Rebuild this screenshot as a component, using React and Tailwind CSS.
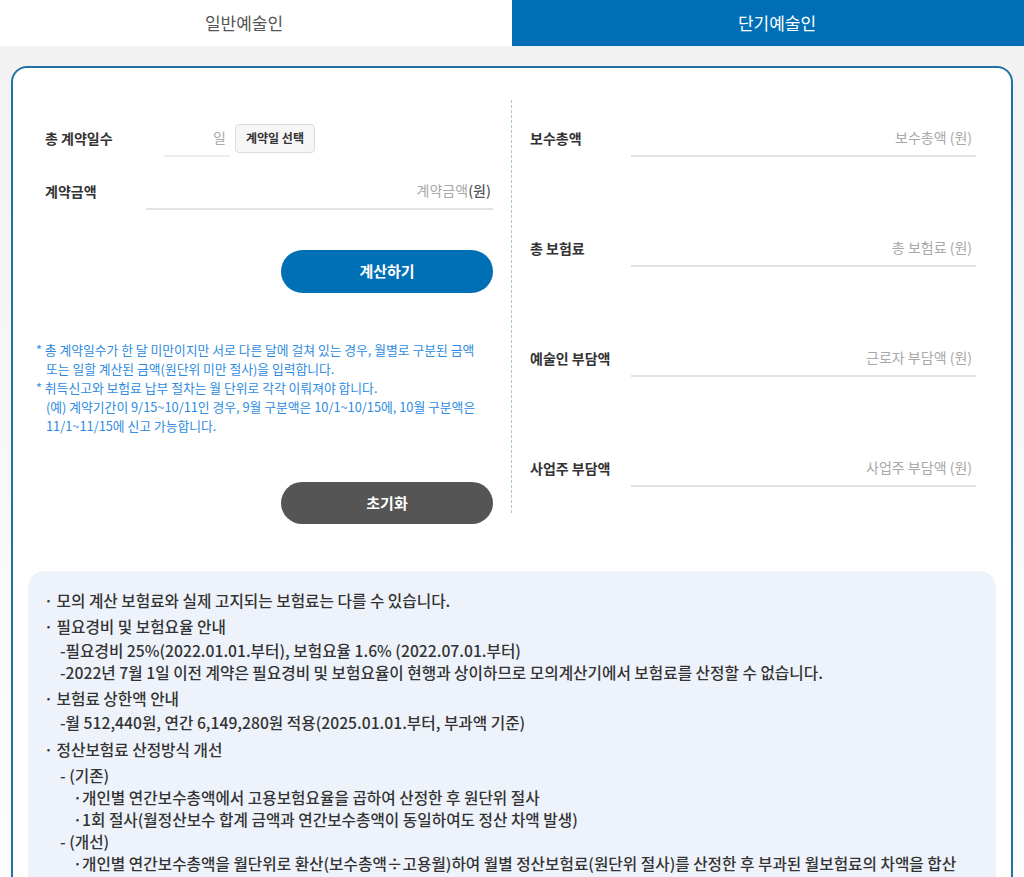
import React from "react";

const font = { fontFamily: '"Noto Sans CJK KR", "Noto Sans", sans-serif' };

function RightRow({ label, placeholder, first }) {
  return (
    <div className={`flex items-center h-[38px] ${first ? "" : "mt-[72px]"}`}>
      <div className="w-[101px] text-[14px] font-bold text-[#333]">{label}</div>
      <div className="flex-1 h-full border-b-2 border-[#e2e2e2] flex items-center">
        <input
          className="w-full bg-transparent outline-none text-right pr-[4px] text-[14px] text-[#333] placeholder:text-[#a8a8a8]"
          placeholder={placeholder}
        />
      </div>
    </div>
  );
}

export default function App() {
  return (
    <div className="w-[1024px] min-h-[877px] bg-white text-[#333]" style={font}>
      {/* Tabs */}
      <div className="flex h-[46px]">
        <div className="w-[512px] shrink-0 flex items-center justify-center pr-[24px] bg-white text-[17px] text-[#555]">일반예술인</div>
        <div className="w-[512px] shrink-0 flex items-center justify-center pl-[18px] bg-[#006fb6] text-[17px] text-white">단기예술인</div>
      </div>
      <div className="bg-gradient-to-b from-[#f2f2f2] to-white pt-[20px]">
        <div className="mx-[11px] border-2 border-[#1f72a3] rounded-[16px] bg-white pt-[32px] pb-[40px]">
          <div className="flex items-start">
            {/* Left column */}
            <div className="w-[498px] pl-[32px] pr-[18px] pt-[19px]">
              <div className="flex items-center h-[38px]">
                <div className="w-[119px] text-[14px] font-bold text-[#333]">총 계약일수</div>
                <div className="w-[66px] h-full border-b-2 border-[#ececec] flex items-center">
                  <input
                    className="w-full bg-transparent outline-none text-right pr-[4px] text-[14px] placeholder:text-[#a8a8a8]"
                    placeholder="일"
                  />
                </div>
                <button className="ml-[5px] h-[29px] px-[10px] rounded-[4px] border border-[#dcdcdc] bg-[#f6f6f6] text-[12px] font-bold text-[#333]">
                  계약일 선택
                </button>
              </div>
              <div className="flex items-center h-[38px] mt-[15px]">
                <div className="w-[101px] text-[14px] font-bold text-[#333]">계약금액</div>
                <div className="flex-1 h-full border-b-2 border-[#e2e2e2] flex items-center pr-[2px]">
                  <input
                    className="flex-1 min-w-0 bg-transparent outline-none text-right text-[14px] placeholder:text-[#a8a8a8]"
                    placeholder="계약금액"
                  />
                  <span className="text-[14px] font-medium text-[#555]">(원)</span>
                </div>
              </div>
              <div className="flex justify-end mt-[40px]">
                <button className="w-[212px] h-[43px] rounded-full bg-[#0070b6] text-white text-[15px] font-bold">
                  계산하기
                </button>
              </div>
              <div className="mt-[47px] -ml-[9px] text-[12.8px] leading-[19px] text-[#2e8be0] whitespace-nowrap">
                <div>* 총 계약일수가 한 달 미만이지만 서로 다른 달에 걸쳐 있는 경우, 월별로 구분된 금액</div>
                <div className="pl-[10px]">또는 일할 계산된 금액(원단위 미만 절사)을 입력합니다.</div>
                <div>* 취득신고와 보험료 납부 절차는 월 단위로 각각 이뤄져야 합니다.</div>
                <div className="pl-[10px]">(예) 계약기간이 9/15~10/11인 경우, 9월 구분액은 10/1~10/15에, 10월 구분액은</div>
                <div className="pl-[10px]">11/1~11/15에 신고 가능합니다.</div>
              </div>
              <div className="flex justify-end mt-[47px]">
                <button className="w-[212px] h-[42px] rounded-full bg-[#555555] text-white text-[15px] font-bold">
                  초기화
                </button>
              </div>
            </div>
            {/* Right column */}
            <div className="flex-1 border-l border-dashed border-[#a9c8d4] pl-[18px] pr-[35px] pt-[19px] pb-[26px]">
              <RightRow first label="보수총액" placeholder="보수총액 (원)" />
              <RightRow label="총 보험료" placeholder="총 보험료 (원)" />
              <RightRow label="예술인 부담액" placeholder="근로자 부담액 (원)" />
              <RightRow label="사업주 부담액" placeholder="사업주 부담액 (원)" />
            </div>
          </div>
          {/* Info box */}
          <div className="mx-[15px] mt-[47px] rounded-[16px] bg-[#eef3fb] pl-[16px] pr-[16px] pt-[19px] pb-[20px] text-[15.7px] leading-[22px] font-medium text-[#333] whitespace-nowrap">
            <div>· 모의 계산 보험료와 실제 고지되는 보험료는 다를 수 있습니다.</div>
            <div className="mt-[4px]">· 필요경비 및 보험요율 안내</div>
            <div className="pl-[16px] mt-[2px]">
              <div>-필요경비 25%(2022.01.01.부터), 보험요율 1.6% (2022.07.01.부터)</div>
              <div>-2022년 7월 1일 이전 계약은 필요경비 및 보험요율이 현행과 상이하므로 모의계산기에서 보험료를 산정할 수 없습니다.</div>
            </div>
            <div className="mt-[4px]">· 보험료 상한액 안내</div>
            <div className="pl-[16px] mt-[2px]">
              <div>-월 512,440원, 연간 6,149,280원 적용(2025.01.01.부터, 부과액 기준)</div>
            </div>
            <div className="mt-[5px]">· 정산보험료 산정방식 개선</div>
            <div className="pl-[16px] mt-[4px]">
              <div>- (기존)</div>
              <div className="pl-[13px]">
                <div>·개인별 연간보수총액에서 고용보험요율을 곱하여 산정한 후 원단위 절사</div>
                <div>·1회 절사(월정산보수 합계 금액과 연간보수총액이 동일하여도 정산 차액 발생)</div>
              </div>
              <div>- (개선)</div>
              <div className="pl-[13px]">
                <div>·개인별 연간보수총액을 월단위로 환산(보수총액÷고용월)하여 월별 정산보험료(원단위 절사)를 산정한 후 부과된 월보험료의 차액을 합산</div>
                <div>·월별 절사(월정산보수 합계 금액과 연간보수총액이 동일하면 정산 차액 미발생)</div>
              </div>
            </div>
          </div>
        </div>
      </div>
    </div>
  );
}
